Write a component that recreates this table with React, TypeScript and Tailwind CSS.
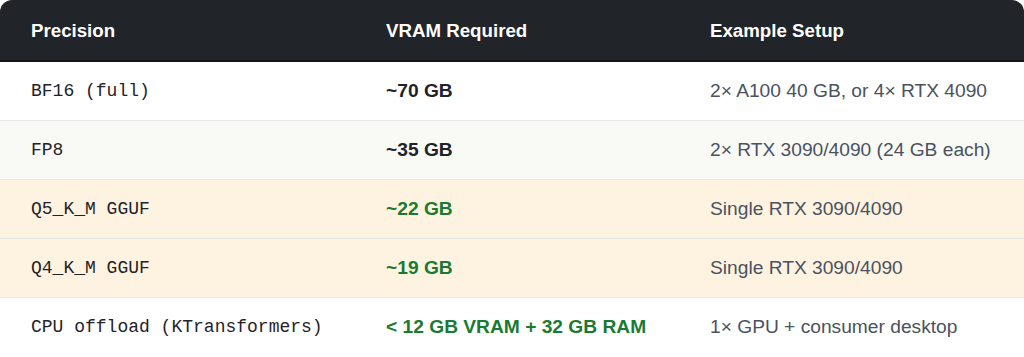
import React from "react";

type Row = {
  precision: string;
  vram: string;
  green: boolean;
  setup: string;
  bg: string;
};

const rows: Row[] = [
  { precision: "BF16 (full)", vram: "~70 GB", green: false, setup: "2× A100 40 GB, or 4× RTX 4090", bg: "bg-white" },
  { precision: "FP8", vram: "~35 GB", green: false, setup: "2× RTX 3090/4090 (24 GB each)", bg: "bg-[#f9faf6]" },
  { precision: "Q5_K_M GGUF", vram: "~22 GB", green: true, setup: "Single RTX 3090/4090", bg: "bg-[#fef3e0]" },
  { precision: "Q4_K_M GGUF", vram: "~19 GB", green: true, setup: "Single RTX 3090/4090", bg: "bg-[#fef3e0]" },
  { precision: "CPU offload (KTransformers)", vram: "< 12 GB VRAM + 32 GB RAM", green: true, setup: "1× GPU + consumer desktop", bg: "bg-white" },
];

export default function App() {
  return (
    <div className="w-[1024px] h-[357px] bg-white">
      <div className="w-full h-full rounded-xl overflow-hidden bg-white font-['Liberation_Sans',Arial,sans-serif]">
        <div className="grid grid-cols-[355px_324px_1fr] h-[62px] pt-[2px] bg-[#212428] border-b-2 border-[#131517] text-white font-bold text-[18.7px] items-center">
          <div className="pl-[31px]">Precision</div>
          <div className="pl-[31px]">VRAM Required</div>
          <div className="pl-[31px]">Example Setup</div>
        </div>
        {rows.map((r, i) => (
          <div
            key={i}
            className={`grid grid-cols-[355px_324px_1fr] items-center ${r.bg} ${i < rows.length - 1 ? "h-[59px] border-b border-[#e8e8e6]" : "h-[59px]"}`}
          >
            <div className="pl-[31px] font-['Liberation_Mono',monospace] text-[18px] text-[#1f2328]">{r.precision}</div>
            <div className={`pl-[31px] font-bold text-[19.2px] ${r.green ? "text-[#1a7a32]" : "text-[#1f2328]"}`}>{r.vram}</div>
            <div className="pl-[31px] text-[19.2px] text-[#4a5260] whitespace-nowrap">{r.setup}</div>
          </div>
        ))}
      </div>
    </div>
  );
}
